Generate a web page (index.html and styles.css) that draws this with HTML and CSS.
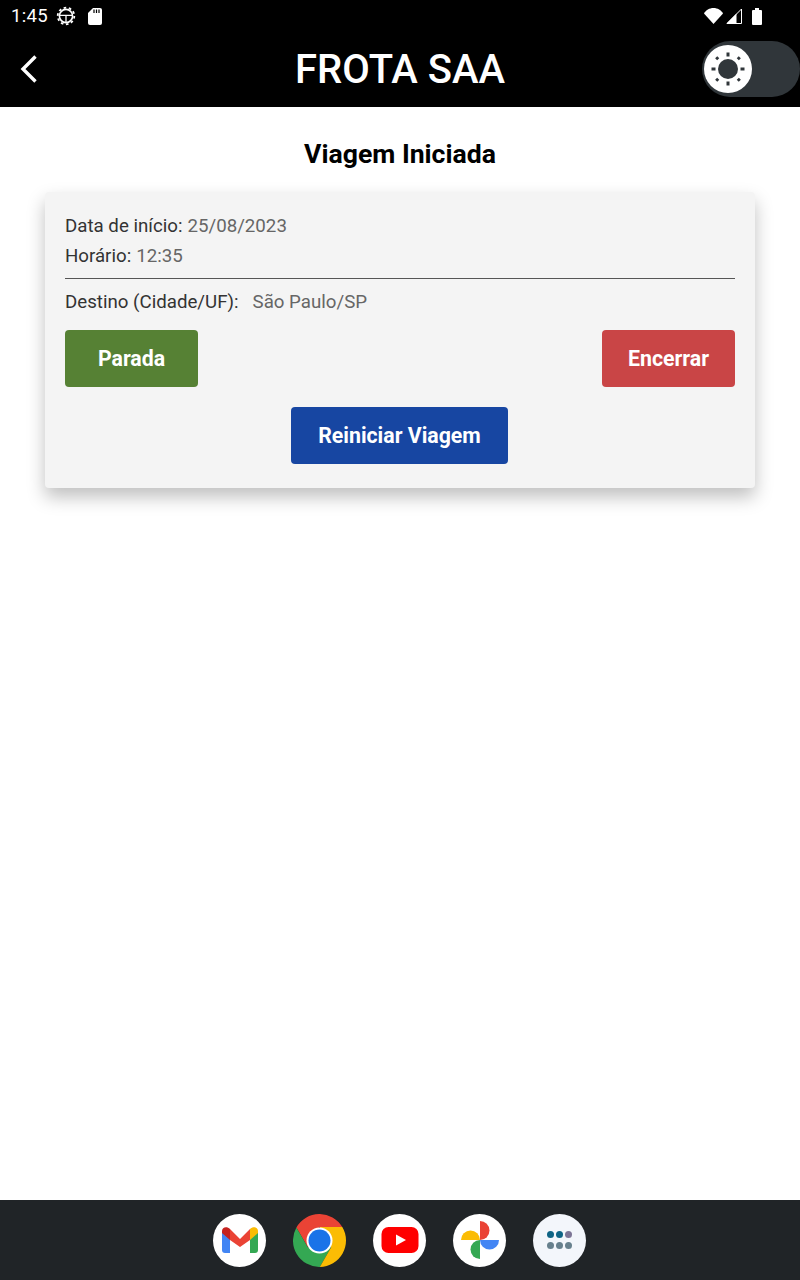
FILE: index.html
```html
<!DOCTYPE html>
<html lang="pt-BR">
<head>
    <meta charset="UTF-8">
    <meta name="viewport" content="width=device-width, initial-scale=1.0">
    <title>Frota SAA</title>
    <link rel="stylesheet" href="styles.css">
</head>
<body>
    <div class="screen">
        <div class="status-bar">
            <div class="status-left">
                <span class="clock">1:45</span>
                <svg class="status-gear" width="20" height="20" viewBox="0 0 20 20">
                    <circle cx="10" cy="10" r="6.6" fill="none" stroke="#fff" stroke-width="1.6"/>
                    <circle cx="10" cy="10" r="8.300" fill="none" stroke="#fff" stroke-width="1.800" stroke-dasharray="2.600 2.610"/>
                    <path d="M3.500 9.300H16.500M10 9.300V16" fill="none" stroke="#fff" stroke-width="1.300"/>
                </svg>
                <svg class="status-sd" width="14" height="17" viewBox="0 0 14 17">
                    <path d="M5 0H12a2 2 0 0 1 2 2V15a2 2 0 0 1-2 2H2a2 2 0 0 1-2-2V5Z" fill="#fff"/>
                    <path d="M6 1.500V5M8.500 1.500V5M11 1.500V5" stroke="#000" stroke-width="1.200"/>
                </svg>
            </div>
            <div class="status-right">
                <svg class="status-wifi" width="19" height="16" viewBox="0 0 19 16">
                    <path d="M0 5.500C1.800 2.200 5.400 0 9.500 0s7.700 2.200 9.500 5.500L9.500 16Z" fill="#fff"/>
                </svg>
                <svg class="status-signal" width="16" height="16" viewBox="0 0 16 16">
                    <path d="M15.500 1V15.500H1Z" fill="none" stroke="#fff" stroke-width="1"/>
                    <path d="M10.500 5.500V15.500H0.500Z" fill="#fff"/>
                </svg>
                <svg class="status-battery" width="10" height="17" viewBox="0 0 10 17">
                    <path d="M3 0H7V2H9a1 1 0 0 1 1 1V16a1 1 0 0 1-1 1H1a1 1 0 0 1-1-1V3a1 1 0 0 1 1-1H3Z" fill="#fff"/>
                </svg>
            </div>
        </div>

        <div class="app-bar">
            <svg class="back-icon" width="20" height="30" viewBox="0 0 20 30">
                <path d="M16.500 2.500L4 15L16.500 27.500" fill="none" stroke="#fff" stroke-width="3.400"/>
            </svg>
            <div class="app-title">FROTA SAA</div>
            <div class="theme-toggle">
                <div class="theme-knob">
                    <svg width="48" height="48" viewBox="0 0 48 48">
                        <circle cx="24" cy="24" r="10" fill="#30363a"/>
                        <path d="M24 7.500V11.500M24 36.500V40.500M7.500 24H11.500M36.500 24H40.500M12.200 12.200L14.200 14.200M33.800 33.800L35.800 35.800M12.200 35.800L14.200 33.800M33.800 14.200L35.800 12.200" stroke="#30363a" stroke-width="3"/>
                    </svg>
                </div>
            </div>
        </div>

        <main class="content">
            <h1 class="page-title">Viagem Iniciada</h1>

            <div class="trip-card">
                <div class="info-row">
                    <span class="info-label">Data de início:</span>
                    <span class="info-value">25/08/2023</span>
                </div>
                <div class="info-row">
                    <span class="info-label">Horário:</span>
                    <span class="info-value">12:35</span>
                </div>
                <div class="divider"></div>
                <div class="info-row destination">
                    <span class="info-label">Destino (Cidade/UF):</span>
                    <span class="info-value">São Paulo/SP</span>
                </div>
                <div class="btn-row">
                    <button class="btn btn-stop">Parada</button>
                    <button class="btn btn-end">Encerrar</button>
                </div>
                <div class="btn-center">
                    <button class="btn btn-restart">Reiniciar Viagem</button>
                </div>
            </div>
        </main>

        <div class="dock">
            <div class="dock-icon">
                <svg width="38" height="28" viewBox="0 0 38 28">
                    <path d="M1 5V24a3 3 0 0 0 3 3H9V11Z" fill="#4285f4"/>
                    <path d="M29 11V27H34a3 3 0 0 0 3-3V5Z" fill="#34a853"/>
                    <path d="M9 3L19 13L29 3V14L19 21L9 14Z" fill="#ea4335"/>
                    <path d="M1 5C1 1 6 0 9 3V14L1 7Z" fill="#c5221f"/>
                    <path d="M37 5C37 1 32 0 29 3V14L37 7Z" fill="#fbbc04"/>
                </svg>
            </div>
            <div class="dock-icon chrome">
                <svg width="53" height="53" viewBox="0 0 53 53">
                    <path d="M26.500 13H49.300A26.500 26.500 0 0 0 3.400 13.500L14.800 33.250Z" fill="#ea4335"/>
                    <path d="M14.800 33.250L3.400 13.500A26.500 26.500 0 0 0 26.800 53L38.200 33.250Z" fill="#34a853"/>
                    <path d="M38.200 33.250L26.800 53A26.500 26.500 0 0 0 49.300 13H26.500Z" fill="#fbbc04"/>
                    <circle cx="26.500" cy="26.500" r="13" fill="#fff"/>
                    <circle cx="26.500" cy="26.500" r="11" fill="#1a73e8"/>
                </svg>
            </div>
            <div class="dock-icon">
                <svg width="38" height="28" viewBox="0 0 38 28">
                    <rect x="0.500" y="1" width="37" height="26" rx="7" fill="#ff0000"/>
                    <path d="M15 8.500L25 14L15 19.500Z" fill="#fff"/>
                </svg>
            </div>
            <div class="dock-icon">
                <svg width="38" height="38" viewBox="0 0 38 38">
                    <path d="M19 19V0a9.500 9.500 0 0 1 0 19Z" fill="#ea4335"/>
                    <path d="M19 19H38a9.500 9.500 0 0 1-19 0Z" fill="#4285f4"/>
                    <path d="M19 19V38a9.500 9.500 0 0 1 0-19Z" fill="#34a853"/>
                    <path d="M19 19H0a9.500 9.500 0 0 1 19 0Z" fill="#fbbc04"/>
                </svg>
            </div>
            <div class="dock-icon apps">
                <div class="apps-grid">
                    <span class="dot dot-teal"></span>
                    <span class="dot dot-teal"></span>
                    <span class="dot dot-purple"></span>
                    <span class="dot dot-gray"></span>
                    <span class="dot dot-gray"></span>
                    <span class="dot dot-gray"></span>
                </div>
            </div>
        </div>
    </div>
</body>
</html>
```

FILE: styles.css
```css
* {
    margin: 0;
    padding: 0;
    box-sizing: border-box;
}

body {
    font-family: Roboto, "Liberation Sans", sans-serif;
    background: white;
}

.screen {
    width: 800px;
    height: 1280px;
    display: flex;
    flex-direction: column;
    overflow: hidden;
}

.status-bar {
    height: 32px;
    background: #000;
    display: flex;
    align-items: center;
    justify-content: space-between;
    padding: 0 38px 0 11px;
}

.status-left,
.status-right {
    display: flex;
    align-items: center;
}

.clock {
    color: white;
    font-size: 18.500px;
    letter-spacing: 0.300px;
}

.status-gear {
    margin-left: 8px;
}

.status-sd {
    margin-left: 12px;
}

.status-signal {
    margin-left: 3px;
}

.status-battery {
    margin-left: 10px;
}

.app-bar {
    height: 75px;
    background: #000;
    display: flex;
    align-items: center;
    justify-content: center;
    position: relative;
}

.back-icon {
    position: absolute;
    left: 19px;
    top: 22px;
}

.app-title {
    color: white;
    font-size: 40px;
    font-weight: 500;
}

.theme-toggle {
    position: absolute;
    left: 702px;
    top: 9px;
    width: 98px;
    height: 56px;
    background: #30363a;
    border-radius: 28px;
    padding: 4px 0 0 2px;
}

.theme-knob {
    width: 48px;
    height: 48px;
    background: white;
    border-radius: 50%;
}

.theme-knob svg {
    display: block;
}

.content {
    flex: 1;
    background: white;
    padding: 0 45px;
}

.page-title {
    font-size: 26.600px;
    font-weight: 700;
    color: #000;
    text-align: center;
    margin-top: 32px;
    line-height: 30px;
}

.trip-card {
    background: #f4f4f4;
    border-radius: 4px;
    box-shadow: 0 9px 18px rgba(0,0,0,0.25);
    margin-top: 23px;
    padding: 19px 20px 23px;
    height: 296px;
}

.info-row {
    display: flex;
    font-size: 18.700px;
    line-height: 30px;
    gap: 5px;
}

.info-label {
    color: #333;
}

.info-value {
    color: #666;
}

.divider {
    height: 1px;
    background: #555;
    margin-top: 7px;
}

.destination {
    margin-top: 8px;
    gap: 14px;
}

.btn {
    border: none;
    border-radius: 4px;
    color: white;
    font-family: inherit;
    font-size: 21.300px;
    font-weight: 700;
    height: 57px;
    padding-bottom: 1px;
}

.btn-row {
    display: flex;
    justify-content: space-between;
    margin-top: 13px;
}

.btn-stop,
.btn-end {
    width: 133px;
}

.btn-stop {
    background: #568134;
}

.btn-end {
    background: #c94546;
}

.btn-center {
    display: flex;
    justify-content: center;
    margin-top: 20px;
    padding-right: 1px;
}

.btn-restart {
    background: #1746a2;
    width: 217px;
}

.dock {
    height: 80px;
    background: #202427;
    display: flex;
    align-items: center;
    justify-content: center;
    gap: 27px;
    padding-right: 1px;
}

.dock-icon {
    width: 53px;
    height: 53px;
    background: white;
    border-radius: 50%;
    display: flex;
    align-items: center;
    justify-content: center;
}

.chrome {
    background: none;
}

.apps {
    background: #f3f6fb;
}

.apps-grid {
    display: grid;
    grid-template-columns: repeat(3, 7px);
    gap: 4px 2.300px;
}

.dot {
    width: 7px;
    height: 7px;
    border-radius: 50%;
}

.dot-teal {
    background: #0f6485;
}

.dot-purple {
    background: #7d7596;
}

.dot-gray {
    background: #67808d;
}
```
